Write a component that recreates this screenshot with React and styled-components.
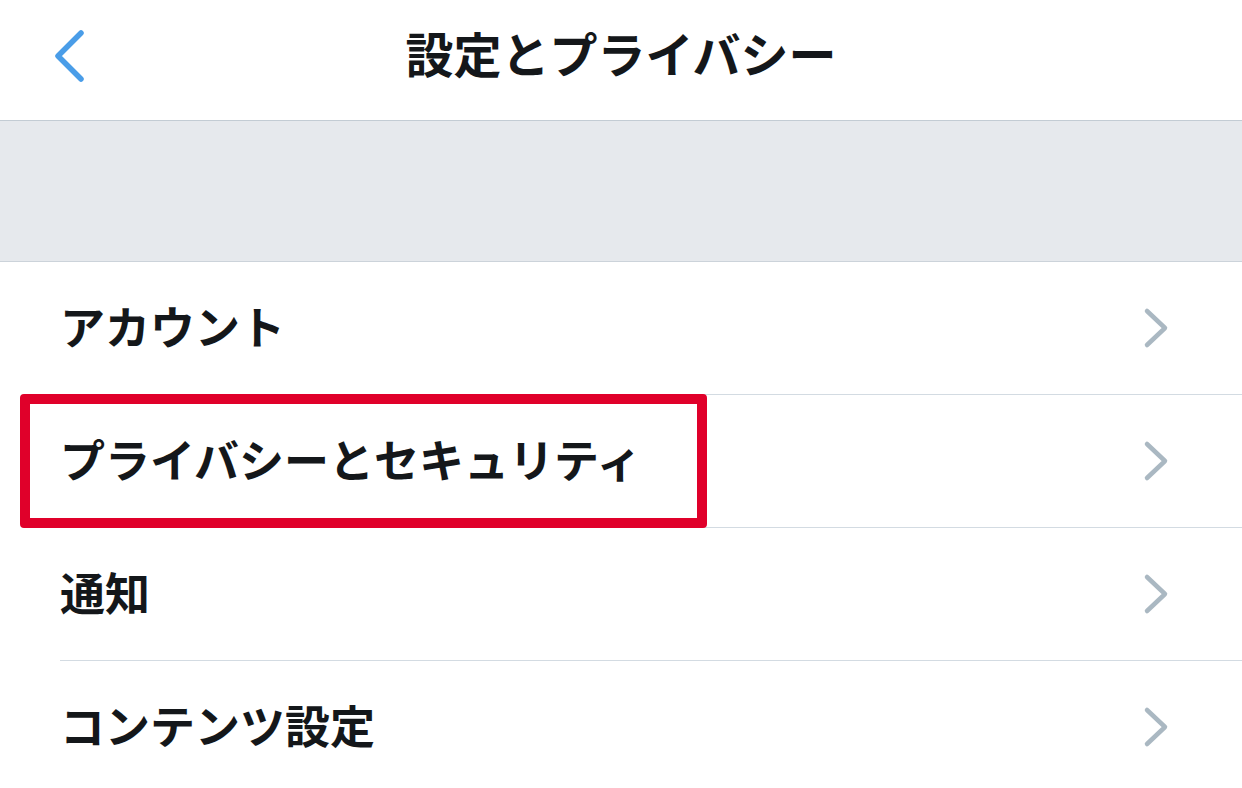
import React from "react";
import styled, { createGlobalStyle } from "styled-components";

const Global = createGlobalStyle`
  html, body { margin: 0; padding: 0; background: #ffffff; }
  body { font-family: "Noto Sans CJK JP", "Noto Sans", sans-serif; color: #14171a; }
`;

const Page = styled.div`
  width: 1242px;
  height: 788px;
  overflow: hidden;
  background: #ffffff;
`;

const Header = styled.header`
  height: 120px;
  border-bottom: 1px solid #c3ccd4;
  display: grid;
  grid-template-columns: 1fr auto 1fr;
  align-items: center;
`;

const BackButton = styled.button`
  justify-self: start;
  margin-left: 50px;
  margin-top: -8px;
  width: 40px;
  height: 60px;
  padding: 0;
  border: 0;
  background: none;
  display: flex;
  align-items: center;
  justify-content: center;
`;

const Title = styled.h1`
  margin: 0 0 16px;
  font-size: 48px;
  font-weight: 700;
  letter-spacing: 0;
  color: #14171a;
  line-height: 1;
`;

const Band = styled.div`
  height: 140px;
  background: #e6e9ed;
  border-bottom: 1px solid #ccd3da;
`;

const List = styled.ul`
  list-style: none;
  margin: 0;
  padding: 0;
`;

const Row = styled.li`
  position: relative;
  height: 132px;
  margin-left: 60px;
  padding-right: 72px;
  border-bottom: 1px solid #d3dbe2;
  display: flex;
  align-items: center;
  justify-content: space-between;
`;

const Label = styled.span`
  font-size: 45px;
  font-weight: 700;
  line-height: 1;
  margin-top: -6px;
  color: #14171a;
`;

const Highlight = styled.div`
  position: absolute;
  left: -40px;
  top: -1px;
  width: 687px;
  height: 134px;
  box-sizing: border-box;
  border: 10px solid #e0002a;
  border-radius: 4px;
  pointer-events: none;
`;

const Chevron = () => (
  <svg width="28" height="44" viewBox="0 0 28 44" fill="none">
    <polyline
      points="5,5 23,22 5,39"
      stroke="#aab8c2"
      strokeWidth="4.5"
      strokeLinecap="round"
      strokeLinejoin="round"
    />
  </svg>
);

const BackArrow = () => (
  <svg width="40" height="60" viewBox="0 0 40 60" fill="none">
    <polyline
      points="31,7 8,30 31,53"
      stroke="#4a9de8"
      strokeWidth="5.5"
      strokeLinecap="round"
      strokeLinejoin="round"
    />
  </svg>
);

const items = [
  { label: "アカウント" },
  { label: "プライバシーとセキュリティ", highlighted: true },
  { label: "通知" },
  { label: "コンテンツ設定" },
];

export default function App() {
  return (
    <Page>
      <Global />
      <Header>
        <BackButton aria-label="戻る">
          <BackArrow />
        </BackButton>
        <Title>設定とプライバシー</Title>
        <span />
      </Header>
      <Band />
      <List>
        {items.map((item) => (
          <Row key={item.label}>
            <Label>{item.label}</Label>
            <Chevron />
            {item.highlighted && <Highlight />}
          </Row>
        ))}
      </List>
    </Page>
  );
}
